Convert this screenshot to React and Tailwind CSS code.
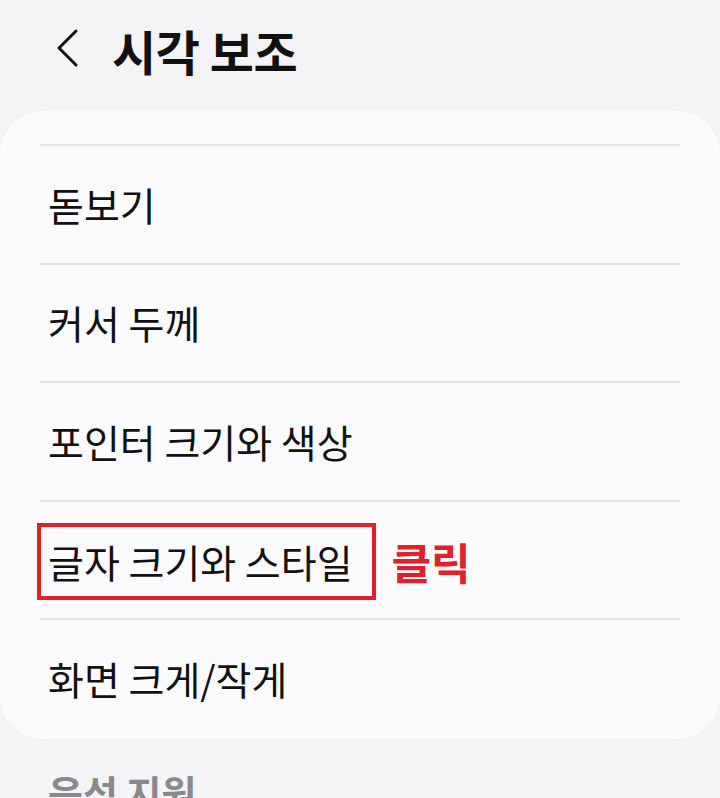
const items = ['돋보기', '커서 두께', '포인터 크기와 색상', '글자 크기와 스타일', '화면 크게/작게'];

const App = () => {
  return (
    <div
      className="w-[720px] h-[798px] overflow-hidden bg-[#f4f4f6] text-[#111]"
      style={{ fontFamily: '"Noto Sans CJK KR", "Noto Sans", sans-serif' }}
    >
      {/* 헤더 */}
      <div className="h-[111px] flex items-start pt-[18px]">
        <button className="w-[60px] h-[60px] ml-[38px] flex items-center justify-center">
          <svg width="30" height="40" viewBox="0 0 30 40" fill="none">
            <path d="M23 3 L6 20 L23 37" stroke="#111" strokeWidth="3" strokeLinecap="round" strokeLinejoin="round" />
          </svg>
        </button>
        <h1 className="ml-[14px] text-[48px] font-bold leading-[64px] tracking-[-0.5px]">시각 보조</h1>
      </div>

      {/* 메뉴 카드 */}
      <div className="bg-[#fbfbfd] rounded-[44px] pt-[33px] pb-[2px]">
        {items.map((item, i) => (
          <div key={i} className="mx-10 border-t-2 border-[#e3e3e6] h-[118.5px] flex items-center">
            {i === 3 ? (
              <>
                <div className="-ml-[3px] mt-[4px] border-[4px] border-[#e0202b] h-[77px] pl-[7px] pr-[19px] flex items-center">
                  <span className="text-[39px] leading-none">{item}</span>
                </div>
                <span className="ml-[16px] mt-[4px] text-[43px] font-bold text-[#e0202b] leading-none">클릭</span>
              </>
            ) : (
              <span className="ml-2 text-[39px] leading-none">{item}</span>
            )}
          </div>
        ))}
      </div>

      {/* 다음 섹션 */}
      <div className="pl-12 pt-[34px] text-[38px] font-bold text-[#8a8a8e] leading-none">음성 지원</div>
    </div>
  );
};

export default App;
